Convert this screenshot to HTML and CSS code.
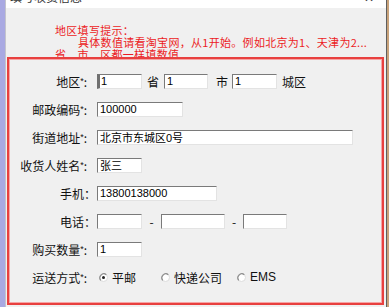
FILE: index.html
```html
<!DOCTYPE html>
<html lang="zh-CN">
<head>
<meta charset="utf-8">
<title>收货信息</title>
<link rel="stylesheet" href="styles.css">
</head>
<body>
<div class="window">
  <div class="edge-left"></div>
  <div class="main">
    <div class="titlebar"><span class="title">填写收货信息</span><span class="close">✕</span></div>
    <div class="hint">
      <div>地区填写提示：</div>
      <div class="indent">具体数值请看淘宝网，从1开始。例如北京为1、天津为2...</div>
      <div>省、市、区都一样填数值</div>
    </div>
    <div class="formbox">
      <div class="row">
        <span class="lbl">地区<span class="req">*</span>:</span>
        <div class="field">
          <input class="tb w45 focus" type="text" value="1">
          <span class="unit">省</span>
          <input class="tb w44" type="text" value="1">
          <span class="unit city">市</span>
          <input class="tb w45" type="text" value="1">
          <span class="unit last">城区</span>
        </div>
      </div>
      <div class="row">
        <span class="lbl">邮政编码<span class="req">*</span>:</span>
        <div class="field"><input class="tb w86" type="text" value="100000"></div>
      </div>
      <div class="row">
        <span class="lbl">街道地址<span class="req">*</span>:</span>
        <div class="field"><input class="tb w256" type="text" value="北京市东城区0号"></div>
      </div>
      <div class="row">
        <span class="lbl">收货人姓名<span class="req">*</span>:</span>
        <div class="field"><input class="tb w45" type="text" value="张三"></div>
      </div>
      <div class="row">
        <span class="lbl wide">手机：</span>
        <div class="field"><input class="tb w120" type="text" value="13800138000"></div>
      </div>
      <div class="row">
        <span class="lbl wide">电话：</span>
        <div class="field">
          <input class="tb w45" type="text" value="">
          <span class="dash d1">-</span>
          <input class="tb w64" type="text" value="">
          <span class="dash d2">-</span>
          <input class="tb w44" type="text" value="">
        </div>
      </div>
      <div class="row">
        <span class="lbl">购买数量<span class="req">*</span>:</span>
        <div class="field"><input class="tb w45" type="text" value="1"></div>
      </div>
      <div class="row">
        <span class="lbl">运送方式<span class="req">*</span>:</span>
        <div class="field">
          <span class="radio r1">
            <svg width="9" height="9" viewBox="0 0 9 9"><circle cx="4.5" cy="4.5" r="4" fill="#fff" stroke="#dcdcdc"/><path d="M1.7 7.3 A4 4 0 0 1 7.3 1.7" fill="none" stroke="#8a8a8a" stroke-width="1.2"/><circle cx="4.5" cy="4.5" r="1.5" fill="#222"/></svg>
            <span>平邮</span>
          </span>
          <span class="radio r2">
            <svg width="9" height="9" viewBox="0 0 9 9"><circle cx="4.5" cy="4.5" r="4" fill="#fff" stroke="#dcdcdc"/><path d="M1.7 7.3 A4 4 0 0 1 7.3 1.7" fill="none" stroke="#8a8a8a" stroke-width="1.2"/></svg>
            <span>快递公司</span>
          </span>
          <span class="radio r3">
            <svg width="9" height="9" viewBox="0 0 9 9"><circle cx="4.5" cy="4.5" r="4" fill="#fff" stroke="#dcdcdc"/><path d="M1.7 7.3 A4 4 0 0 1 7.3 1.7" fill="none" stroke="#8a8a8a" stroke-width="1.2"/></svg>
            <span class="latin">EMS</span>
          </span>
        </div>
      </div>
    </div>
  </div>
  <div class="edge-right"></div>
</div>
</body>
</html>
```
FILE: styles.css
```css
html, body {
  margin: 0;
  padding: 0;
  height: 100%;
}
body {
  background: #f0f0f0;
  font-family: "Noto Sans CJK SC", "Noto Sans", sans-serif;
  color: #000;
  overflow: hidden;
}
.window {
  display: flex;
  height: 307px;
}
.edge-left {
  width: 5px;
  flex: none;
  background: #a9a9e2;
  border-right: 1px solid #c4c4cc;
}
.edge-right {
  width: 2px;
  flex: none;
  border-left: 1px solid #5e5e5e;
  background: #c8a27a;
}
.main {
  flex: 1;
  min-width: 0;
  display: flex;
  flex-direction: column;
}
.titlebar {
  height: 8px;
  flex: none;
  background: #fff;
  overflow: hidden;
  display: flex;
  justify-content: space-between;
  padding: 0 12px 0 4px;
  font-size: 12px;
  line-height: 12px;
  color: #333;
}
.title, .close {
  margin-top: -9px;
}
.hint {
  flex: none;
  height: 33px;
  padding: 16px 0 0 49px;
  font-size: 11px;
  line-height: 12px;
  letter-spacing: 0.3px;
  color: #ec1c24;
  white-space: nowrap;
}
.indent {
  padding-left: 23px;
}
.formbox {
  position: relative;
  box-sizing: border-box;
  height: 248px;
  margin: 0 2px 0 1px;
  border: 2px solid #e8403f;
  box-shadow: inset 0 0 0 1px #f6a5a5;
  background: #f0f0f0;
  padding: 8px 0 0;
}
.row {
  display: flex;
  align-items: center;
  height: 28px;
}
.lbl {
  flex: none;
  width: 78px;
  margin-right: 10px;
  text-align: right;
  font-size: 12px;
  color: #111;
  white-space: nowrap;
}
.lbl.wide {
  width: 87px;
  margin-right: 1px;
}
.req {
  font-family: "Liberation Sans", sans-serif;
  font-size: 9px;
  vertical-align: 3px;
}
.field {
  display: flex;
  align-items: center;
  font-size: 12px;
}
.tb {
  box-sizing: border-box;
  height: 15px;
  margin: 0;
  padding: 0 2px;
  border: 1px solid;
  border-color: #7a7a7a #e3e3e3 #e3e3e3 #7a7a7a;
  background: #fff;
  font-family: "Liberation Sans", "Noto Sans CJK SC", sans-serif;
  font-size: 11px;
  line-height: 13px;
  color: #000;
  outline: none;
}
.tb.focus {
  border-left: 3px solid #707070;
  padding-left: 1px;
}
.w44 { width: 44px; }
.w45 { width: 45px; }
.w64 { width: 64px; }
.w86 { width: 86px; }
.w120 { width: 120px; }
.w256 { width: 256px; }
.unit {
  margin: 0 5px;
  color: #111;
}
.unit.city {
  margin: 0 4px 0 8px;
}
.unit.last {
  margin: 0 0 0 5px;
}
.dash {
  text-align: center;
  color: #111;
}
.d1 { width: 19px; }
.d2 { width: 18px; }
.radio {
  display: flex;
  align-items: center;
  gap: 4px;
  color: #111;
}
.radio svg {
  display: block;
  flex: none;
}
.r1 { margin-left: 2px; }
.r2 { margin-left: 25px; }
.r3 { margin-left: 15px; }
.latin {
  font-family: "Liberation Sans", sans-serif;
}
```
